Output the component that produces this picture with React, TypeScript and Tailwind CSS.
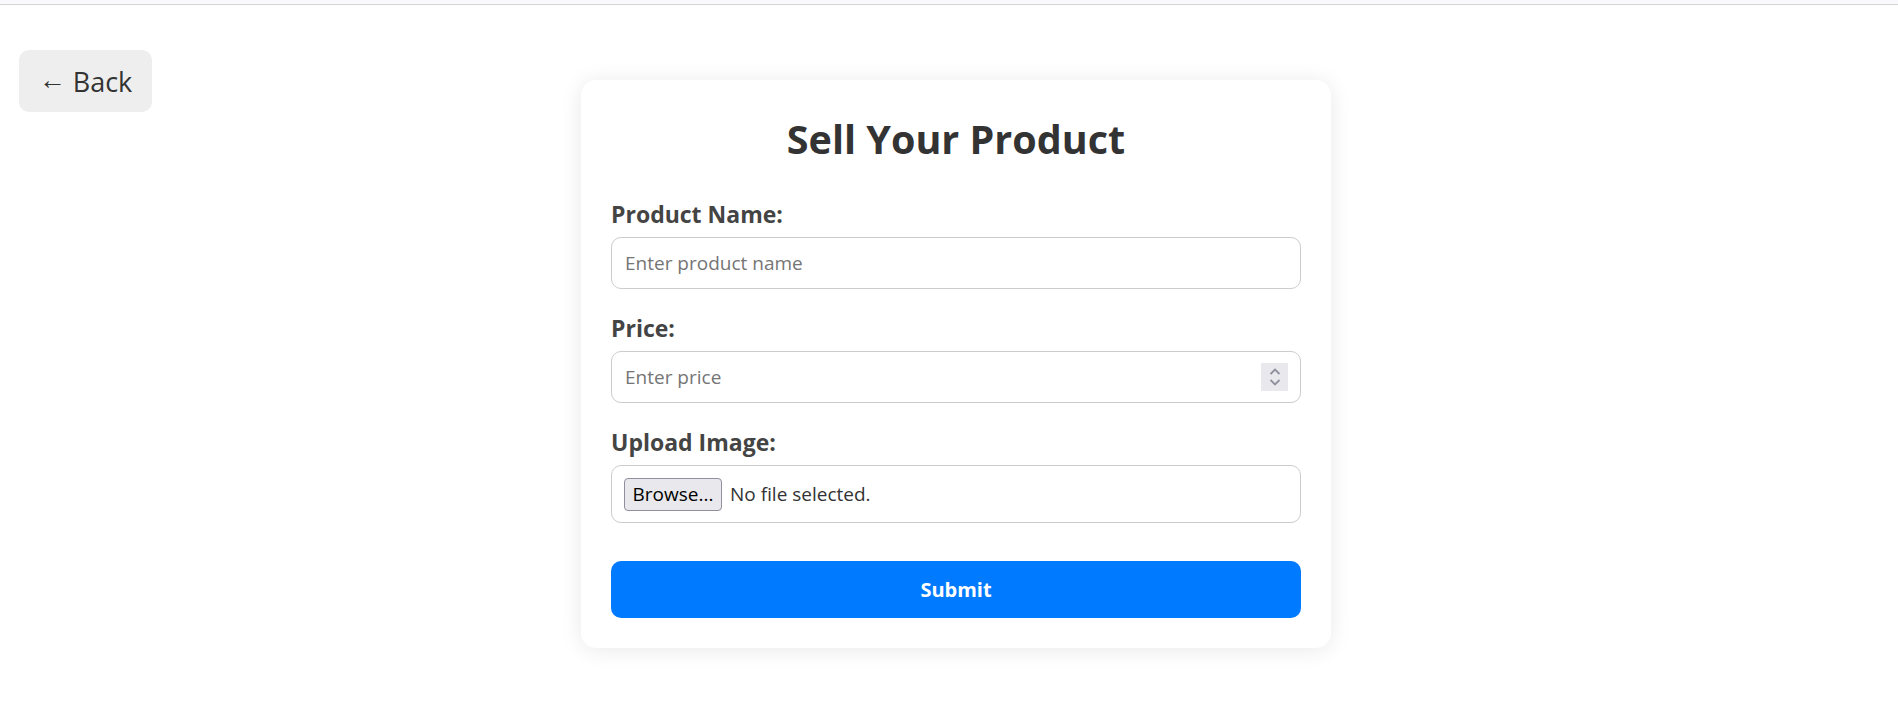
import { useState } from "react";

const font = "font-['Segoe_UI','Open_Sans',sans-serif]";

function Spinner() {
  return (
    <div className="pointer-events-none absolute right-[13px] top-1/2 flex h-[28px] w-[27px] -translate-y-1/2 flex-col items-center justify-center gap-[4px] bg-[#e9e9ed]">
      <svg width="12" height="7" viewBox="0 0 12 7" fill="none">
        <path d="M1.5 6 6 1.5 10.5 6" stroke="#8f8f9d" strokeWidth="1.8" />
      </svg>
      <svg width="12" height="7" viewBox="0 0 12 7" fill="none">
        <path d="M1.5 1 6 5.5 10.5 1" stroke="#8f8f9d" strokeWidth="1.8" />
      </svg>
    </div>
  );
}

export default function App() {
  const [name, setName] = useState("");
  const [price, setPrice] = useState("");
  const [file, setFile] = useState<string | null>(null);

  return (
    <div className={`min-h-screen bg-white ${font}`}>
      {/* browser frame edge */}
      <div className="h-[5px] border-b border-[#d4d4d8] bg-[#f9f9fb]" />

      <div className="grid grid-cols-[1fr_750px_1fr] items-start pl-[14px] pt-[45px]">
        <div>
          <button className="ml-[5px] flex h-[62px] w-[133px] items-center justify-center gap-[7px] rounded-[10px] bg-[#eeeeee] text-[27px] leading-none text-[#333]">
            <span className="-translate-y-[3px]">←</span>
            <span>Back</span>
          </button>
        </div>

        <div className="mt-[30px] rounded-[15px] bg-white p-[30px] shadow-[0_2px_22px_rgba(0,0,0,0.09)]">
          <h1 className="mt-[4px] text-center text-[39.5px] font-bold leading-[50px] text-[#333]">
            Sell Your Product
          </h1>

          <form className="mt-[36px] flex flex-col" onSubmit={(e) => e.preventDefault()}>
            <label className="text-[23px] font-bold leading-[28px] text-[#444]">Product Name:</label>
            <input
              value={name}
              onChange={(e) => setName(e.target.value)}
              placeholder="Enter product name"
              className="mt-[9px] h-[52px] rounded-[10px] border border-[#cccccc] px-[13px] text-[19px] text-[#333] outline-none placeholder:text-[#757575]"
            />

            <label className="mt-[25px] text-[23px] font-bold leading-[28px] text-[#444]">Price:</label>
            <div className="relative mt-[9px]">
              <input
                value={price}
                onChange={(e) => setPrice(e.target.value)}
                inputMode="decimal"
                placeholder="Enter price"
                className="h-[52px] w-full rounded-[10px] border border-[#cccccc] px-[13px] text-[19px] text-[#333] outline-none placeholder:text-[#757575]"
              />
              <Spinner />
            </div>

            <label className="mt-[25px] text-[23px] font-bold leading-[28px] text-[#444]">Upload Image:</label>
            <label className="mt-[9px] flex h-[58px] cursor-pointer items-center gap-[8px] rounded-[10px] border border-[#cccccc] px-[12px]">
              <span className="flex h-[33px] w-[98px] items-center justify-center rounded-[4px] border border-[#8f8f9d] bg-[#e9e9ed] text-[19px] text-black">
                Browse...
              </span>
              <span className="text-[19px] text-[#333]">{file ?? "No file selected."}</span>
              <input
                type="file"
                accept="image/*"
                className="hidden"
                onChange={(e) => setFile(e.target.files?.[0]?.name ?? null)}
              />
            </label>

            <button
              type="submit"
              className="mt-[38px] h-[57px] rounded-[10px] bg-[#007bff] text-[20px] font-bold text-white"
            >
              Submit
            </button>
          </form>
        </div>

        <div />
      </div>
    </div>
  );
}
